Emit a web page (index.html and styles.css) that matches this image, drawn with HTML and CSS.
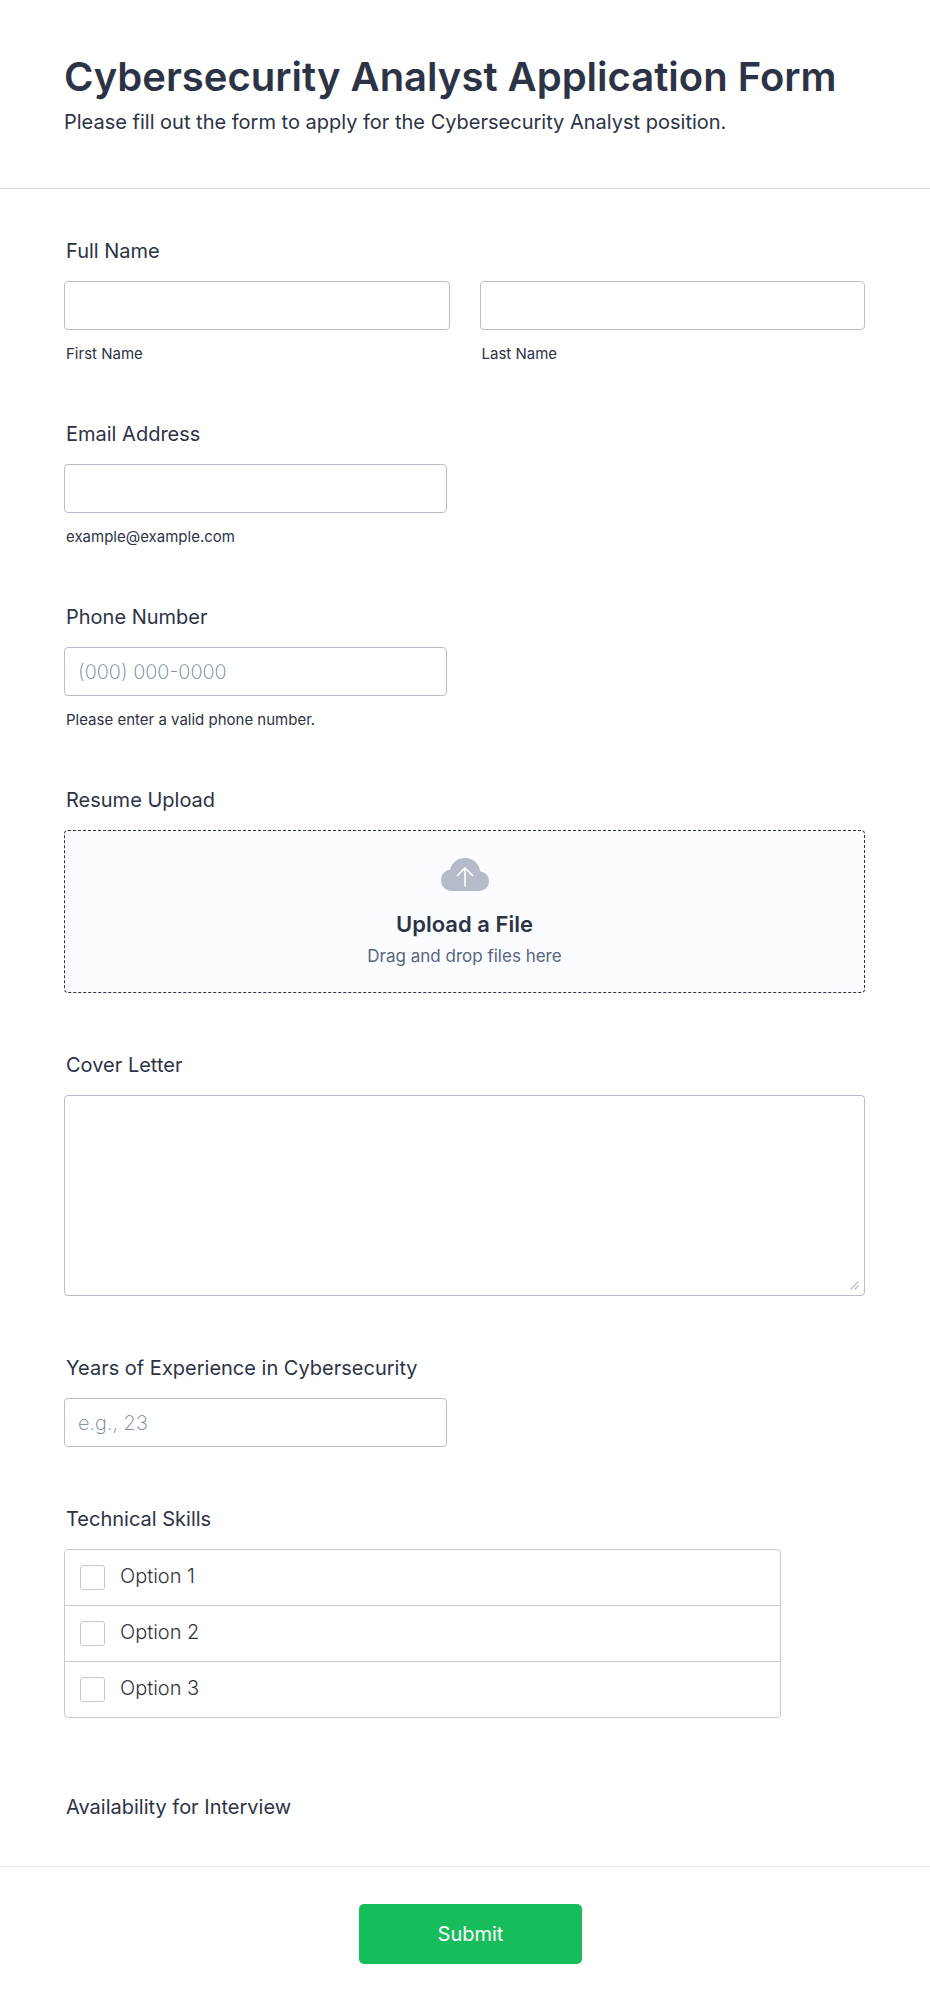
FILE: index.html
```
<!DOCTYPE html>
<html lang="en">
<head>
<meta charset="utf-8">
<meta name="viewport" content="width=device-width, initial-scale=1">
<title>Cybersecurity Analyst Application Form</title>
<link rel="stylesheet" href="styles.css">
</head>
<body>
<form class="form">
  <header class="form-header">
    <h1 class="title">Cybersecurity Analyst Application Form</h1>
    <p class="subtitle">Please fill out the form to apply for the Cybersecurity Analyst position.</p>
  </header>

  <div class="fields">
    <fieldset class="field">
      <legend class="label">Full Name</legend>
      <div class="name-row">
        <div class="name-part">
          <input class="input" type="text" id="first-name">
          <label class="hint" for="first-name">First Name</label>
        </div>
        <div class="name-part">
          <input class="input" type="text" id="last-name">
          <label class="hint" for="last-name">Last Name</label>
        </div>
      </div>
    </fieldset>

    <div class="field">
      <label class="label" for="email">Email Address</label>
      <input class="input half" type="email" id="email" aria-describedby="email-hint">
      <span class="hint" id="email-hint">example@example.com</span>
    </div>

    <div class="field">
      <label class="label" for="phone">Phone Number</label>
      <input class="input half" type="tel" id="phone" placeholder="(000) 000-0000" aria-describedby="phone-hint">
      <span class="hint" id="phone-hint">Please enter a valid phone number.</span>
    </div>

    <div class="field">
      <span class="label" id="resume-label">Resume Upload</span>
      <button class="dropzone" type="button" aria-describedby="resume-label">
        <svg class="cloud" viewBox="0 0 48 33" aria-hidden="true">
          <path fill="#b5bbc9" d="M11 33C4.600 33 0 28.300 0 22.300C0 16.500 3.900 12.300 9.200 11.600C10.500 4.800 16.300 0 24 0C32 0 38.300 5.600 39.300 13.600C44.400 14.200 48 18.200 48 23C48 28.800 43.800 33 38 33Z"/>
          <path fill="none" stroke="#fff" stroke-width="1.600" d="M24 28.500V10.500M16 18L24 10L32 18"/>
        </svg>
        <span class="drop-title">Upload a File</span>
        <span class="drop-text">Drag and drop files here</span>
      </button>
    </div>

    <div class="field">
      <label class="label" for="cover">Cover Letter</label>
      <div class="textarea-wrap">
        <textarea class="input textarea" id="cover"></textarea>
        <svg class="grip" viewBox="0 0 9 9" aria-hidden="true">
          <path fill="none" stroke="#b8bdc9" stroke-width="1.200" d="M0.500 8.500L8.500 0.500M4.500 8.500L8.500 4.500"/>
        </svg>
      </div>
    </div>

    <div class="field">
      <label class="label" for="years">Years of Experience in Cybersecurity</label>
      <input class="input half" type="text" inputmode="numeric" id="years" placeholder="e.g., 23">
    </div>

    <fieldset class="field field-options">
      <legend class="label">Technical Skills</legend>
      <div class="options">
        <label class="option"><input class="check" type="checkbox"><span class="option-text">Option 1</span></label>
        <label class="option"><input class="check" type="checkbox"><span class="option-text">Option 2</span></label>
        <label class="option"><input class="check" type="checkbox"><span class="option-text">Option 3</span></label>
      </div>
    </fieldset>

    <div class="field">
      <span class="label">Availability for Interview</span>
    </div>
  </div>

  <footer class="form-footer">
    <button class="submit" type="submit">Submit</button>
  </footer>
</form>
</body>
</html>
```
FILE: styles.css
```
* { box-sizing: border-box; }

body {
  margin: 0;
  background: #fff;
  color: #2c3345;
  font-family: Inter, "Liberation Sans", sans-serif;
}

.form-header {
  padding: 52px 64px 54px;
  border-bottom: 1px solid #d7d8e1;
}

.title {
  margin: 0;
  font-size: 40px;
  font-weight: 600;
  line-height: 50px;
}

.subtitle {
  margin: 8px 0 0;
  font-size: 20px;
  font-weight: 400;
  line-height: 24px;
}

.fields {
  display: flex;
  flex-direction: column;
  gap: 60px;
  padding: 50px 65px 47px 64px;
}

.field {
  display: flex;
  flex-direction: column;
  margin: 0;
  padding: 0;
  border: 0;
  min-width: 0;
}

.field-options { margin-bottom: 17px; }

.label {
  padding: 0 2px;
  font-size: 20px;
  font-weight: 400;
  line-height: 24px;
}

.label + * { margin-top: 18px; }

.name-row {
  display: grid;
  grid-template-columns: 1fr 1fr;
  gap: 30px;
}

.name-part {
  display: flex;
  flex-direction: column;
}

.input {
  width: 100%;
  height: 49px;
  padding: 0 13px;
  border: 1px solid #b8bdc9;
  border-radius: 4px;
  background: #fff;
  color: #2c3345;
  font: 200 20px Inter, "Liberation Sans", sans-serif;
}

.input::placeholder {
  color: #6b8299;
  opacity: 1;
}

.half { max-width: 383px; }

.textarea-wrap { position: relative; }

.textarea {
  display: block;
  height: 201px;
  padding: 12px 13px;
  resize: none;
}

.grip {
  position: absolute;
  right: 6px;
  bottom: 6px;
  width: 9px;
  height: 9px;
}

.hint {
  margin-top: 15px;
  padding: 0 2px;
  font-size: 15px;
  line-height: 17px;
}

.dropzone {
  display: flex;
  flex-direction: column;
  align-items: center;
  padding: 27px 16px 24px;
  border: 1px dashed #2c3345;
  border-radius: 4px;
  background: #fafcff;
  color: #2c3345;
  font-family: inherit;
}

.cloud {
  width: 48px;
  height: 33px;
}

.drop-title {
  margin-top: 19px;
  font-size: 22px;
  font-weight: 600;
  line-height: 28px;
}

.drop-text {
  margin-top: 6px;
  color: #57647e;
  font-size: 17px;
  line-height: 24px;
}

.options {
  max-width: 717px;
  border: 1px solid #c8cad1;
  border-radius: 4px;
}

.option {
  display: flex;
  align-items: center;
  gap: 15px;
  height: 56px;
  padding: 0 15px;
  color: #33333d;
  font-size: 20px;
  font-weight: 300;
  line-height: 24px;
}

.option:first-child { height: 55px; }

.option + .option { border-top: 1px solid #cbcbcf; }

.option-text { padding-bottom: 3px; }

.check {
  appearance: none;
  width: 25px;
  height: 25px;
  margin: 0;
  border: 1px solid #c3c8d4;
  border-radius: 3px;
  background: #fff;
}

.form-footer {
  display: flex;
  justify-content: center;
  padding: 37px 16px 49px 27px;
  border-top: 1px solid #e6e8f0;
}

.submit {
  width: 223px;
  height: 60px;
  border: 0;
  border-radius: 5px;
  background: #18bd5b;
  color: #fff;
  font: 400 20px Inter, "Liberation Sans", sans-serif;
}
```
